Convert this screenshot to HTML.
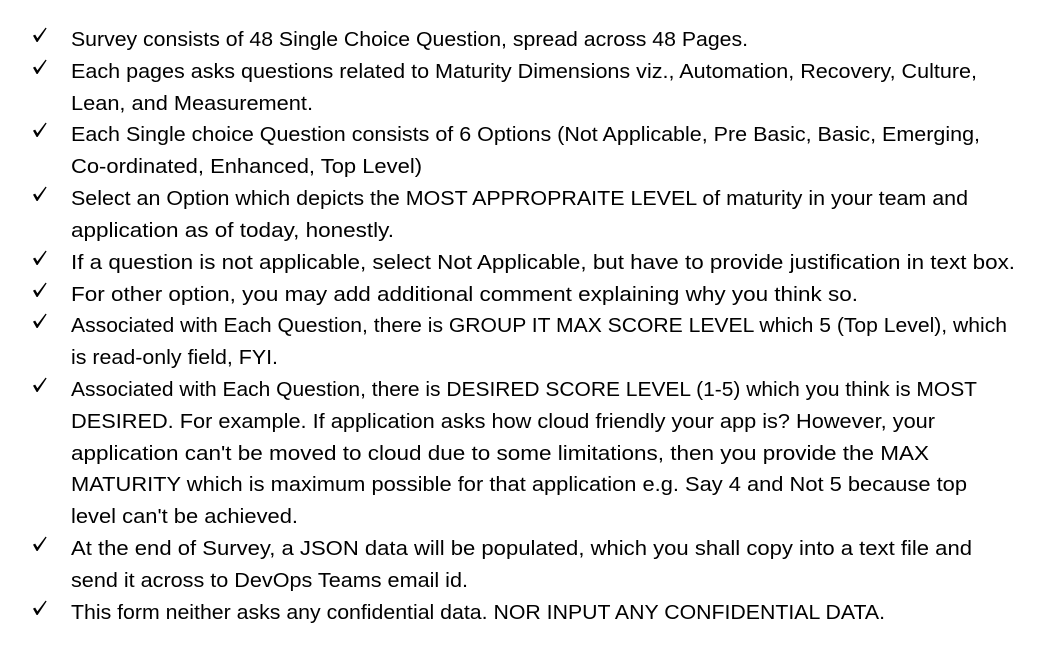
<!DOCTYPE html>
<html><head><meta charset="utf-8"><style>
html,body{margin:0;padding:0;background:#fff;width:1045px;height:653px;overflow:hidden}
svg{display:block}
text{font-family:"Liberation Sans","DejaVu Sans",sans-serif;font-size:20px;fill:#000}
</style></head><body>
<svg width="1045" height="653" xmlns="http://www.w3.org/2000/svg">
<defs>
<path id="ck" d="M0,7.6 L2.2,6.6 L4.4,10.4 L12.6,-0.4 L13.6,0.4 L4.6,14 L3.6,14 Z" fill="#000"/>
</defs>
<g transform="translate(0,3)">
<use href="#ck" x="33" y="25"/>
<use href="#ck" x="33" y="57"/>
<use href="#ck" x="33" y="120"/>
<use href="#ck" x="33" y="184"/>
<use href="#ck" x="33" y="248"/>
<use href="#ck" x="33" y="280"/>
<use href="#ck" x="33" y="311"/>
<use href="#ck" x="33" y="375"/>
<use href="#ck" x="33" y="534"/>
<use href="#ck" x="33" y="598"/>
</g>
<g>
<text x="71" y="46" textLength="677" lengthAdjust="spacingAndGlyphs">Survey consists of 48 Single Choice Question, spread across 48 Pages.</text>
<text x="71" y="78" textLength="906" lengthAdjust="spacingAndGlyphs">Each pages asks questions related to Maturity Dimensions viz., Automation, Recovery, Culture,</text>
<text x="71" y="110" textLength="242" lengthAdjust="spacingAndGlyphs">Lean, and Measurement.</text>
<text x="71" y="141" textLength="909" lengthAdjust="spacingAndGlyphs">Each Single choice Question consists of 6 Options (Not Applicable, Pre Basic, Basic, Emerging,</text>
<text x="71" y="173" textLength="351" lengthAdjust="spacingAndGlyphs">Co-ordinated, Enhanced, Top Level)</text>
<text x="71" y="205" textLength="897" lengthAdjust="spacingAndGlyphs">Select an Option which depicts the MOST APPROPRAITE LEVEL of maturity in your team and</text>
<text x="71" y="237" textLength="323" lengthAdjust="spacingAndGlyphs">application as of today, honestly.</text>
<text x="71" y="269" textLength="944" lengthAdjust="spacingAndGlyphs">If a question is not applicable, select Not Applicable, but have to provide justification in text box.</text>
<text x="71" y="301" textLength="787" lengthAdjust="spacingAndGlyphs">For other option, you may add additional comment explaining why you think so.</text>
<text x="71" y="332" textLength="936" lengthAdjust="spacingAndGlyphs">Associated with Each Question, there is GROUP IT MAX SCORE LEVEL which 5 (Top Level), which</text>
<text x="71" y="364" textLength="207" lengthAdjust="spacingAndGlyphs">is read-only field, FYI.</text>
<text x="71" y="396" textLength="906" lengthAdjust="spacingAndGlyphs">Associated with Each Question, there is DESIRED SCORE LEVEL (1-5) which you think is MOST</text>
<text x="71" y="428" textLength="864" lengthAdjust="spacingAndGlyphs">DESIRED. For example. If application asks how cloud friendly your app is? However, your</text>
<text x="71" y="460" textLength="858" lengthAdjust="spacingAndGlyphs">application can't be moved to cloud due to some limitations, then you provide the MAX</text>
<text x="71" y="491" textLength="896" lengthAdjust="spacingAndGlyphs">MATURITY which is maximum possible for that application e.g. Say 4 and Not 5 because top</text>
<text x="71" y="523" textLength="227" lengthAdjust="spacingAndGlyphs">level can't be achieved.</text>
<text x="71" y="555" textLength="901" lengthAdjust="spacingAndGlyphs">At the end of Survey, a JSON data will be populated, which you shall copy into a text file and</text>
<text x="71" y="587" textLength="397" lengthAdjust="spacingAndGlyphs">send it across to DevOps Teams email id.</text>
<text x="71" y="619" textLength="814" lengthAdjust="spacingAndGlyphs">This form neither asks any confidential data. NOR INPUT ANY CONFIDENTIAL DATA.</text>
</g>
</svg>
</body></html>
